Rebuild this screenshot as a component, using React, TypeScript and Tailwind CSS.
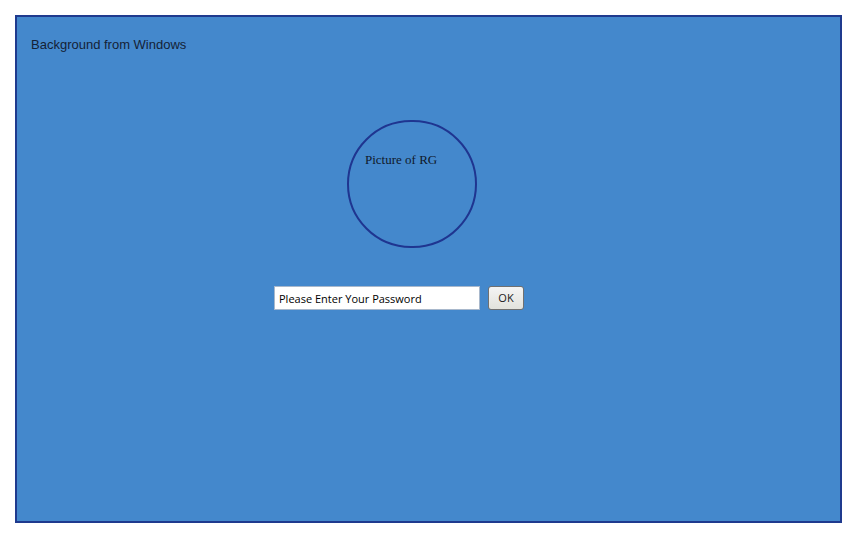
import React from 'react'

const App = () => {
  const [password, setPassword] = React.useState('Please Enter Your Password')

  return (
    <div className="h-[538px] w-[857px] bg-white p-[15px]">
      <div className="flex h-[508px] w-[827px] flex-col border-2 border-[#1f3a8e] bg-[#4488cc] pl-[14px] pt-[20px]">
        <p className="text-[13px] leading-[15px] text-[#142236] [font-family:'Liberation_Sans',Arial,sans-serif]">
          Background from Windows
        </p>

        <div className="ml-[316px] mt-[68px] h-[128px] w-[130px] rounded-full border-2 border-[#1f3590] pl-[16px] pt-[24px]">
          <span className="text-[13px] leading-[16px] text-[#10182a] [font-family:'Liberation_Serif','Times_New_Roman',serif]">
            Picture of RG
          </span>
        </div>

        <div className="ml-[243px] mt-[38px] flex items-center gap-[8px]">
          <input
            className="h-[24px] w-[206px] border border-[#a8b8cc] bg-white px-[4px] text-[11px] text-black outline-none [font-family:'Open_Sans',sans-serif]"
            value={password}
            onChange={(e) => setPassword(e.target.value)}
          />
          <button className="h-[24px] w-[36px] rounded-[3px] border border-[#707070] bg-gradient-to-b from-[#f4f4f4] to-[#e2e2dc] text-[11px] text-[#1a1a1a] [font-family:'Open_Sans',sans-serif]">
            OK
          </button>
        </div>
      </div>
    </div>
  )
}

export default App
